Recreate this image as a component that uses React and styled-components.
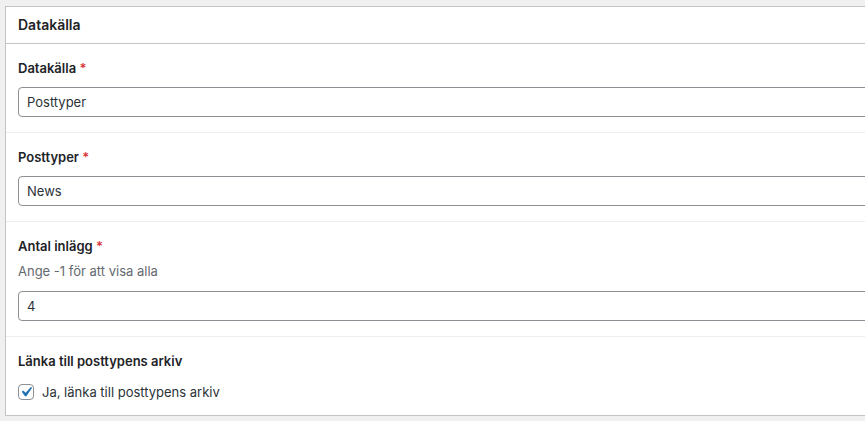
import React from 'react';
import styled, { createGlobalStyle } from 'styled-components';

const Global = createGlobalStyle`
    body {
        margin: 0;
        background: #f0f0f1;
        font-family: Inter, "Liberation Sans", sans-serif;
        color: #1d2327;
        font-size: 13px;
    }
`;

function App() {
    return (
        <Page>
            <Global />
            <Panel>
                <PanelHeader>Datakälla</PanelHeader>
                <Field>
                    <Label>Datakälla <Req>*</Req></Label>
                    <Input defaultValue="Posttyper" />
                </Field>
                <Field>
                    <Label>Posttyper <Req>*</Req></Label>
                    <Input defaultValue="News" />
                </Field>
                <Field>
                    <Label>Antal inlägg <Req>*</Req></Label>
                    <Description>Ange -1 för att visa alla</Description>
                    <Input defaultValue="4" />
                </Field>
                <Field last>
                    <Label>Länka till posttypens arkiv</Label>
                    <CheckRow>
                        <Box>
                            <svg width="20" height="20" viewBox="0 0 20 20">
                                <path d="M14.83 4.89l1.34.94-5.81 8.38H9.02L5.78 9.67l1.34-1.25 2.57 2.4z" fill="#2271b1" />
                            </svg>
                        </Box>
                        Ja, länka till posttypens arkiv
                    </CheckRow>
                </Field>
            </Panel>
        </Page>
    );
}

const Page = styled.div`
    padding: 6px 0 0 5px;
    height: 421px;
    box-sizing: border-box;
`;

const Panel = styled.div`
    background: #fff;
    border: 1px solid #c3c4c7;
    border-right: none;
`;

const PanelHeader = styled.div`
    height: 36px;
    line-height: 36px;
    padding: 0 12px;
    font-size: 14px;
    font-weight: 600;
    border-bottom: 1px solid #c3c4c7;
`;

const Field = styled.div`
    padding: 15px 0 15px 12px;
    border-bottom: ${(props) => props.last ? 'none' : '1px solid #eeeeee'};
`;

const Label = styled.div`
    font-weight: 600;
    font-size: 13px;
    line-height: 18px;
    margin-bottom: 10px;
    color: #1d2327;
`;

const Req = styled.span`
    color: #d63638;
`;

const Description = styled.p`
    margin: -3px 0 11px;
    color: #646970;
    font-size: 13px;
    line-height: 18px;
`;

const Input = styled.input`
    display: block;
    width: calc(100% + 20px);
    height: 30px;
    box-sizing: border-box;
    border: 1px solid #8c8f94;
    border-radius: 4px;
    padding: 0 8px;
    font-family: inherit;
    font-size: 13px;
    color: #2c3338;
    background: #fff;
    outline: none;
`;

const CheckRow = styled.label`
    display: flex;
    align-items: center;
    gap: 8px;
    margin-top: 14px;
    font-size: 13px;
    color: #2c3338;
`;

const Box = styled.span`
    width: 16px;
    height: 16px;
    box-sizing: border-box;
    border: 1px solid #8c8f94;
    border-radius: 4px;
    display: flex;
    align-items: center;
    justify-content: center;
    overflow: visible;

    svg {
        flex: none;
        margin: -2px;
    }
`;

export default App;
